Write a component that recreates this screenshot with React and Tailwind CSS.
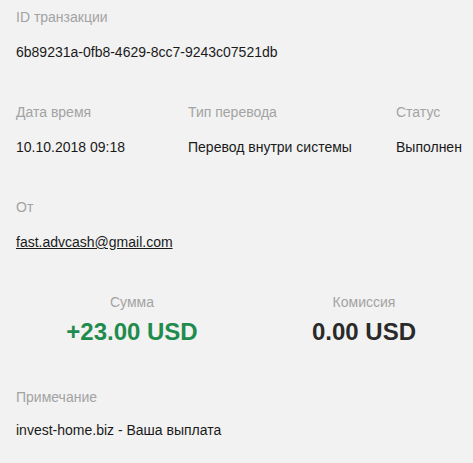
import React from "react";

function Label({ children, className = "" }) {
  return <div className={"text-[14px] leading-[20px] text-[#a3a3a3] " + className}>{children}</div>;
}

function Value({ children, className = "" }) {
  return <div className={"text-[14px] leading-[20px] text-[#1a1a1a] " + className}>{children}</div>;
}

export default function App() {
  return (
    <div className="h-[463px] w-[473px] overflow-hidden bg-[#f2f2f2] pl-4 pt-[7px] font-['Liberation_Sans',Arial,sans-serif]">
      <div>
        <Label>ID транзакции</Label>
        <Value className="mt-[15px]">6b89231a-0fb8-4629-8cc7-9243c07521db</Value>
      </div>

      <div className="mt-[40px] flex w-[560px]">
        <div className="w-[172px]">
          <Label>Дата время</Label>
          <Value className="mt-[15px]">10.10.2018 09:18</Value>
        </div>
        <div className="w-[208px]">
          <Label>Тип перевода</Label>
          <Value className="mt-[15px]">Перевод внутри системы</Value>
        </div>
        <div>
          <Label>Статус</Label>
          <Value className="mt-[15px]">Выполнен</Value>
        </div>
      </div>

      <div className="mt-[40px]">
        <Label>От</Label>
        <Value className="mt-[15px]">
          <span className="underline underline-offset-1">fast.advcash@gmail.com</span>
        </Value>
      </div>

      <div className="mt-[40px] flex w-[464px]">
        <div className="w-[232px] text-center">
          <Label>Сумма</Label>
          <div className="mt-[6px] text-[24px] font-bold leading-[28px] text-[#1f8b4d]">+23.00 USD</div>
        </div>
        <div className="w-[232px] text-center">
          <Label>Комиссия</Label>
          <div className="mt-[6px] text-[24px] font-bold leading-[28px] text-[#2a2a2a]">0.00 USD</div>
        </div>
      </div>

      <div className="mt-[41px]">
        <Label>Примечание</Label>
        <Value className="mt-[13px]">invest-home.biz - Ваша выплата</Value>
      </div>
    </div>
  );
}
